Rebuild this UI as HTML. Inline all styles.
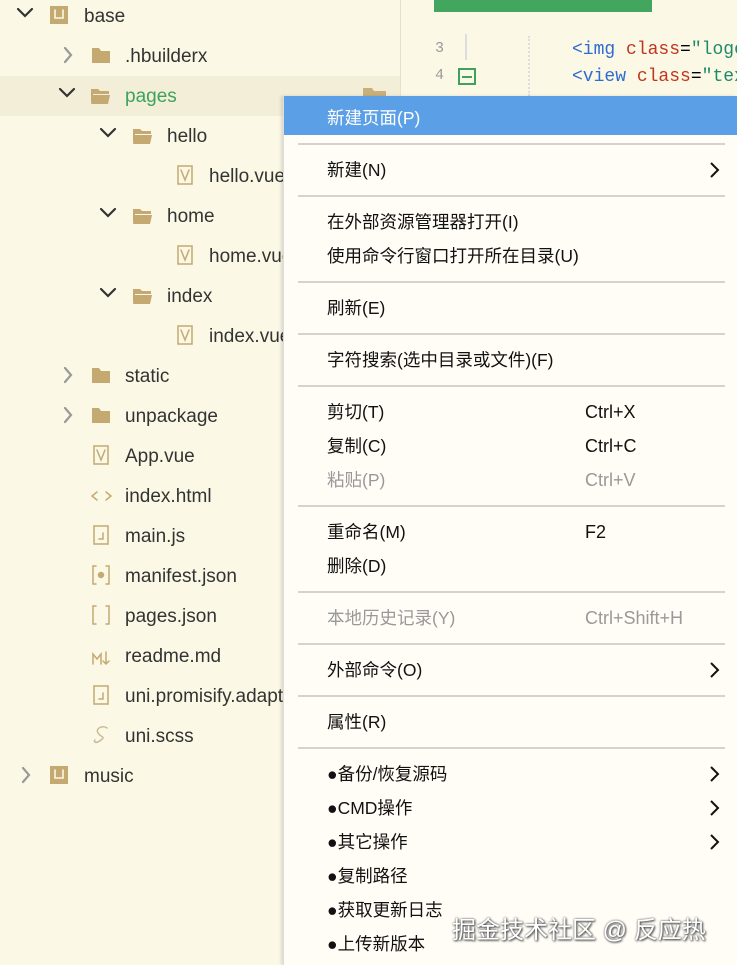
<!DOCTYPE html>
<html><head><meta charset="utf-8">
<style>
*{margin:0;padding:0;box-sizing:border-box}
body{width:737px;height:965px;overflow:hidden;background:#fcf8e6;font-family:"Liberation Sans","Noto Sans CJK SC",sans-serif;position:relative}
.row{position:absolute;left:0;width:400px;height:40px;font-size:19px;color:#333}
.row span.t{position:absolute;top:5px;line-height:24px;white-space:nowrap}
.ed{position:absolute;left:400px;top:0;width:337px;height:100px;background:#fcf8e6;border-left:1px solid #e6e1cc}
.menu{position:absolute;left:283px;top:96px;width:454px;height:869px;background:#fffdf6;box-shadow:-2px 0 3px rgba(0,0,0,.12);border-left:1px solid #ddd}
.mi{position:absolute;left:43px;font-size:17.5px;color:#111;line-height:22px;white-space:nowrap}
.sc{position:absolute;left:301px;font-size:18px;color:#111;line-height:22px}
.dis{color:#999}
.sep{position:absolute;left:14px;width:427px;height:2px;background:#d4d3d0}
.arr{position:absolute;left:424px}
</style></head><body>

<div class="row" style="top:76px;background:#f2eed8"></div>

<svg width="400" height="800" style="position:absolute;left:0;top:0" fill="none" stroke-linecap="round">
<g stroke="#333" stroke-width="2.2">
<path d="M18 9l7 7 7-7"/>
<path d="M60 89l7 7 7-7"/>
<path d="M101 129l7 7 7-7"/>
<path d="M101 209l7 7 7-7"/>
<path d="M101 289l7 7 7-7"/>
</g>
<g stroke="#999" stroke-width="2.2">
<path d="M65 48l6 7-6 7"/>
<path d="M65 368l6 7-6 7"/>
<path d="M65 408l6 7-6 7"/>
<path d="M23 768l6 7-6 7"/>
</g>
<rect x="50" y="6" width="18" height="18" fill="#c4a971"/>
<path d="M55 10v8h8v-8" stroke="#fcf8e6" stroke-width="1.6"/>
<rect x="50" y="766" width="18" height="18" fill="#c4a971"/>
<path d="M55 770v8h8v-8" stroke="#fcf8e6" stroke-width="1.6"/>
<g fill="#c4a971">
<path d="M92 48h7l2 3h9v12h-18z"/>
<path d="M92 368h7l2 3h9v12h-18z"/>
<path d="M92 408h7l2 3h9v12h-18z"/>
</g>
<g fill="#c4a971">
<path d="M91 89h7l2 2h9v3h-16v8h-2z M93 95h17l-2 9h-17z"/>
<path d="M133 129h7l2 2h9v3h-16v8h-2z M135 135h17l-2 9h-17z"/>
<path d="M133 209h7l2 2h9v3h-16v8h-2z M135 215h17l-2 9h-17z"/>
<path d="M133 289h7l2 2h9v3h-16v8h-2z M135 295h17l-2 9h-17z"/>
<path d="M363 88h9l2 3h12v12h-23z" opacity=".9"/>
</g>
<g stroke="#c4a971" stroke-width="1.5">
<rect x="178" y="166" width="14" height="18"/><path d="M181 170l4 10 4-10"/>
<rect x="178" y="246" width="14" height="18"/><path d="M181 250l4 10 4-10"/>
<rect x="178" y="326" width="14" height="18"/><path d="M181 330l4 10 4-10"/>
<rect x="94" y="446" width="14" height="18"/><path d="M97 450l4 10 4-10"/>
<path d="M97 492l-5 4 5 4 M106 492l5 4-5 4"/>
<rect x="94" y="526" width="14" height="18"/><path d="M103 533v6h-4"/>
<path d="M96 566h-3v18h3 M106 566h3v18h-3"/><circle cx="101" cy="575" r="2.5" fill="#c4a971"/>
<path d="M96 606h-3v18h3 M106 606h3v18h-3"/>
<path d="M93 664v-10l4 5 4-5v10 M106 652v12 M103 661l3 3 3-3"/>
<rect x="94" y="686" width="14" height="18"/><path d="M103 693v6h-4"/>
<path d="M107 728c-4-3-12 0-9 5s8 3 3 7-8 2-6 0" stroke="#c8bb98"/>
</g>
</svg>

<div class="row" style="top:0"><span class="t" style="left:84px">base</span></div>
<div class="row" style="top:40px"><span class="t" style="left:125px">.hbuilderx</span></div>
<div class="row" style="top:80px"><span class="t" style="left:125px;color:#3ea25d">pages</span></div>
<div class="row" style="top:120px"><span class="t" style="left:167px">hello</span></div>
<div class="row" style="top:160px"><span class="t" style="left:209px">hello.vue</span></div>
<div class="row" style="top:200px"><span class="t" style="left:167px">home</span></div>
<div class="row" style="top:240px"><span class="t" style="left:209px">home.vue</span></div>
<div class="row" style="top:280px"><span class="t" style="left:167px">index</span></div>
<div class="row" style="top:320px"><span class="t" style="left:209px">index.vue</span></div>
<div class="row" style="top:360px"><span class="t" style="left:125px">static</span></div>
<div class="row" style="top:400px"><span class="t" style="left:125px">unpackage</span></div>
<div class="row" style="top:440px"><span class="t" style="left:125px">App.vue</span></div>
<div class="row" style="top:480px"><span class="t" style="left:125px">index.html</span></div>
<div class="row" style="top:520px"><span class="t" style="left:125px">main.js</span></div>
<div class="row" style="top:560px"><span class="t" style="left:125px">manifest.json</span></div>
<div class="row" style="top:600px"><span class="t" style="left:125px">pages.json</span></div>
<div class="row" style="top:640px"><span class="t" style="left:125px">readme.md</span></div>
<div class="row" style="top:680px"><span class="t" style="left:125px">uni.promisify.adaptor.js</span></div>
<div class="row" style="top:720px"><span class="t" style="left:125px">uni.scss</span></div>
<div class="row" style="top:760px"><span class="t" style="left:84px">music</span></div>

<div class="ed">
<div style="position:absolute;left:33px;top:0;width:218px;height:12px;background:#43a65e"></div>
<div style="position:absolute;left:34px;top:40px;font:15px 'Liberation Mono',monospace;color:#999">3</div>
<div style="position:absolute;left:34px;top:67px;font:15px 'Liberation Mono',monospace;color:#999">4</div>
<div style="position:absolute;left:64px;top:34px;width:2px;height:26px;background:#ddd"></div>
<div style="position:absolute;left:57px;top:68px;width:18px;height:17px;border:2px solid #3ea25d"></div>
<div style="position:absolute;left:61px;top:76px;width:10px;height:2px;background:#3ea25d"></div>
<div style="position:absolute;left:127px;top:36px;height:60px;border-left:2px dotted #ddd"></div>
<div style="position:absolute;left:171px;top:37px;font:18px 'Liberation Mono',monospace;white-space:nowrap;line-height:27px"><span style="color:#2f6ccf">&lt;img</span> <span style="color:#c0361c">class</span>=<span style="color:#1e8a6a">"logo"</span><br><span style="color:#2f6ccf">&lt;view</span> <span style="color:#c0361c">class</span>=<span style="color:#1e8a6a">"text"</span></div>
</div>

<div class="menu">
<div style="position:absolute;left:0;top:0;width:454px;height:39px;background:#5ba0e6"></div>
<div class="mi" style="top:11px;color:#fff">新建页面(P)</div>
<div class="sep" style="top:47px"></div>
<div class="mi" style="top:63px">新建(N)</div>
<div class="sep" style="top:99px"></div>
<div class="mi" style="top:115px">在外部资源管理器打开(I)</div>
<div class="mi" style="top:149px">使用命令行窗口打开所在目录(U)</div>
<div class="sep" style="top:185px"></div>
<div class="mi" style="top:201px">刷新(E)</div>
<div class="sep" style="top:237px"></div>
<div class="mi" style="top:253px">字符搜索(选中目录或文件)(F)</div>
<div class="sep" style="top:289px"></div>
<div class="mi" style="top:305px">剪切(T)</div><div class="sc" style="top:305px">Ctrl+X</div>
<div class="mi" style="top:339px">复制(C)</div><div class="sc" style="top:339px">Ctrl+C</div>
<div class="mi dis" style="top:373px">粘贴(P)</div><div class="sc dis" style="top:373px">Ctrl+V</div>
<div class="sep" style="top:409px"></div>
<div class="mi" style="top:425px">重命名(M)</div><div class="sc" style="top:425px">F2</div>
<div class="mi" style="top:459px">删除(D)</div>
<div class="sep" style="top:495px"></div>
<div class="mi dis" style="top:511px">本地历史记录(Y)</div><div class="sc dis" style="top:511px">Ctrl+Shift+H</div>
<div class="sep" style="top:547px"></div>
<div class="mi" style="top:563px">外部命令(O)</div>
<div class="sep" style="top:599px"></div>
<div class="mi" style="top:615px">属性(R)</div>
<div class="sep" style="top:651px"></div>
<div class="mi" style="top:667px">●备份/恢复源码</div>
<div class="mi" style="top:701px">●CMD操作</div>
<div class="mi" style="top:735px">●其它操作</div>
<div class="mi" style="top:769px">●复制路径</div>
<div class="mi" style="top:803px">●获取更新日志</div>
<div class="mi" style="top:837px">●上传新版本</div>
<svg class="arr" width="14" height="800" style="top:0" fill="none" stroke="#111" stroke-width="2">
<path d="M3 67l7 7-7 7"/>
<path d="M3 567l7 7-7 7"/>
<path d="M3 671l7 7-7 7"/>
<path d="M3 705l7 7-7 7"/>
<path d="M3 739l7 7-7 7"/>
</svg>
</div>

<div style="position:absolute;left:452px;top:910px;font-size:24px;color:#fff;text-shadow:0 0 2px #555,1px 1px 2px #333;white-space:nowrap">掘金技术社区 @ 反应热</div>
</body></html>
